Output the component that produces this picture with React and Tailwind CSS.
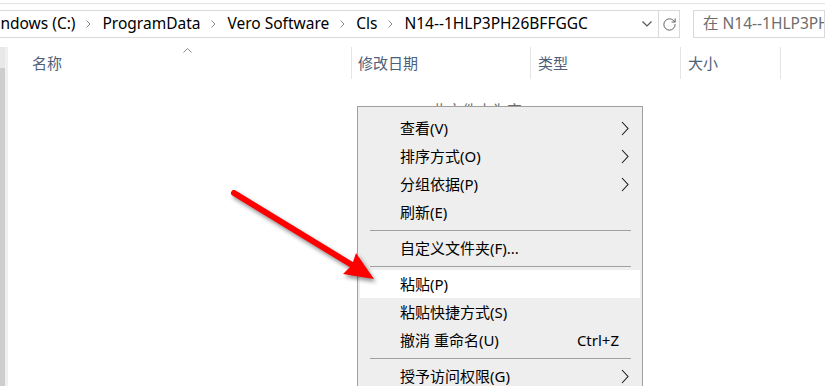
import { RotateCw } from "lucide-react";

const FONT = { fontFamily: '"Noto Sans", "Noto Sans CJK SC", sans-serif' };

// 面包屑路径
const CRUMBS = ["Windows (C:)", "ProgramData", "Vero Software", "Cls", "N14--1HLP3PH26BFFGGC"];

// 右键菜单项
const MENU = [
  { label: "查看(V)", sub: true },
  { label: "排序方式(O)", sub: true },
  { label: "分组依据(P)", sub: true },
  { label: "刷新(E)" },
  { sep: true },
  { label: "自定义文件夹(F)..." },
  { sep: true },
  { label: "粘贴(P)", active: true },
  { label: "粘贴快捷方式(S)" },
  { label: "撤消 重命名(U)", shortcut: "Ctrl+Z" },
  { sep: true },
  { label: "授予访问权限(G)", sub: true },
];

const Crumb = () => (
  <svg width="5" height="8" viewBox="0 0 5 8" className="mx-[11px] shrink-0">
    <polyline points="0.5,0.5 4,4 0.5,7.5" fill="none" stroke="#8a8a8a" strokeWidth="1" />
  </svg>
);

const SubArrow = () => (
  <svg width="8" height="15" viewBox="0 0 8 15">
    <polyline points="1,1 7,7.5 1,14" fill="none" stroke="#1a1a1a" strokeWidth="1.1" />
  </svg>
);

export default function App() {
  return (
    <div className="relative h-[386px] w-[825px] overflow-hidden bg-white text-black" style={FONT}>
      {/* 顶部细线 */}
      <div className="h-[3px]" />
      <div className="h-px bg-[#e3e3e3]" />

      {/* 地址栏 + 搜索框 */}
      <div className="mt-[6px] flex h-[28px] items-stretch">
        <div className="ml-[-25px] flex w-[705px] shrink-0 items-center border border-[#d9d9d9]">
          <div className="flex flex-1 items-center pl-[6px] text-[15.5px] whitespace-nowrap">
            {CRUMBS.map((c, i) => (
              <div key={c} className="flex items-center">
                {i > 0 && <Crumb />}
                <span>{c}</span>
              </div>
            ))}
          </div>
          <svg width="10" height="6" viewBox="0 0 10 6" className="mr-[6px]">
            <polyline points="0.5,0.5 5,5 9.5,0.5" fill="none" stroke="#555" strokeWidth="1.2" />
          </svg>
          <div className="flex h-full w-[21px] items-center justify-center border-l border-[#d9d9d9]">
            <RotateCw className="h-[15px] w-[15px] text-[#606060]" strokeWidth={1.6} />
          </div>
        </div>
        <div className="ml-[13px] flex flex-1 items-center overflow-hidden border border-[#d9d9d9] pl-[9px] text-[15.5px] whitespace-nowrap text-[#6d6d6d]">
          在 N14--1HLP3PH26BFFGGC 中搜索
        </div>
      </div>

      {/* 主体 */}
      <div className="mt-[9px] flex h-[339px]">
        {/* 左侧导航滚动条 */}
        <div className="flex w-[8px] shrink-0">
          <div className="flex w-[5px] flex-col">
            <div className="h-[21px] bg-[#e8e8e8]" />
            <div className="flex-1 bg-[#cdcdcd]" />
          </div>
          <div className="w-[3px] bg-[#f0f0f0]" />
        </div>

        <div className="flex flex-1 flex-col">
          {/* 列标题 */}
          <div className="flex h-[32px] text-[15px] text-[#4c607a]">
            <div className="relative flex w-[344px] items-center border-r border-[#e5e5e5] pl-[24px]">
              名称
              <svg width="9" height="5" viewBox="0 0 9 5" className="absolute top-[1px] left-[175px]">
                <polyline points="0.5,4.5 4.5,0.5 8.5,4.5" fill="none" stroke="#8a8a8a" strokeWidth="1" />
              </svg>
            </div>
            <div className="flex w-[179px] items-center border-r border-[#e5e5e5] pl-[6px]">修改日期</div>
            <div className="flex w-[150px] items-center border-r border-[#e5e5e5] pl-[7px]">类型</div>
            <div className="flex w-[100px] items-center border-r border-[#e5e5e5] pl-[7px]">大小</div>
          </div>

          {/* 空文件夹提示 */}
          <div className="pt-[20px] pl-[424px] text-[15px] text-[#6d6d6d]">此文件夹为空。</div>
        </div>
      </div>

      {/* 右键菜单 */}
      <div className="absolute top-[106px] left-[357px] w-[286px] border border-[#a0a0a0] bg-[#eeeeee] px-[2px] pt-[7px] pb-[4px] text-[15px] text-black">
        {MENU.map((m, i) =>
          m.sep ? (
            <div key={i} className="flex h-[8px] items-center pr-[9px] pl-[10px]">
              <div className="h-px flex-1 bg-[#a0a0a0]" />
            </div>
          ) : (
            <div
              key={i}
              className={`flex h-[28px] items-center justify-between pl-[40px] ${m.active ? "bg-white" : ""} ${m.shortcut ? "pr-[21px]" : "pr-[11px]"}`}
            >
              <span className="whitespace-nowrap">{m.label}</span>
              {m.sub && <SubArrow />}
              {m.shortcut && <span>{m.shortcut}</span>}
            </div>
          )
        )}
      </div>

      {/* 红色箭头标注 */}
      <svg
        className="pointer-events-none absolute inset-0 [filter:drop-shadow(2px_3px_2px_rgba(0,0,0,0.45))]"
        width="825"
        height="386"
        viewBox="0 0 825 386"
      >
        <line x1="234" y1="193" x2="352" y2="265" stroke="#ff0000" strokeWidth="6" strokeLinecap="round" />
        <polygon points="374,279 356,253 352,265 343,274" fill="#ff0000" />
      </svg>
    </div>
  );
}
